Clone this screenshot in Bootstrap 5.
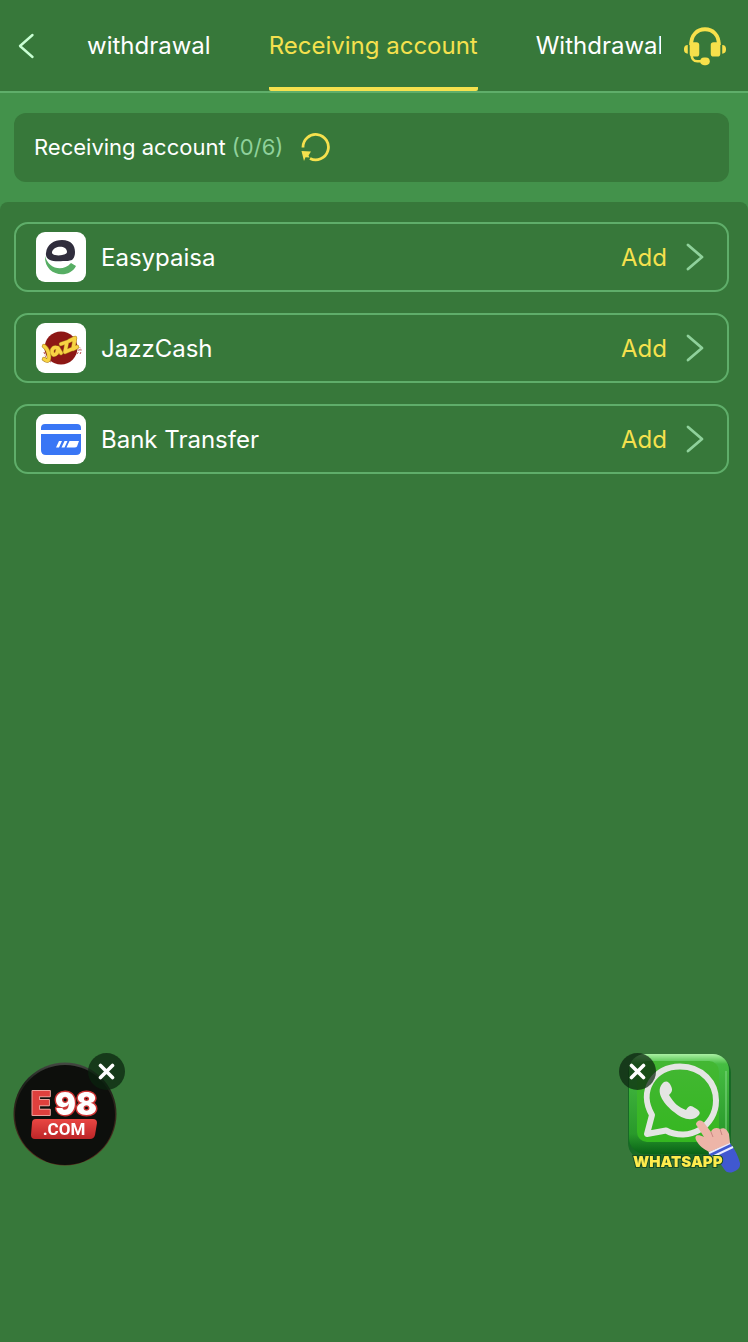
<!DOCTYPE html>
<html lang="en">
<head>
<meta charset="utf-8">
<meta name="viewport" content="width=device-width, initial-scale=1">
<title>Receiving account</title>
<link href="https://cdn.jsdelivr.net/npm/bootstrap@5.3.0/dist/css/bootstrap.min.css" rel="stylesheet">
<style>
  :root { --base: #37783a; --band: #43924b; --line: #5fae6a; --gold: #f5e14e; --mint: #8fd19b; }
  body { background: var(--base); color: #fff; font-family: Inter, "Liberation Sans", sans-serif; font-size: 24px; line-height: 32px; }
  a { color: inherit; text-decoration: none; }
  svg { display: block; }
  .topbar { height: 93px; border-bottom: 2px solid var(--line); }
  .back { width: 87px; padding-left: 18px; }
  .tabs { gap: 58px; margin-right: 22px; }
  .tab { border-top: 4px solid transparent; border-bottom: 4px solid transparent; white-space: nowrap; }
  .tab.active { color: var(--gold); border-bottom-color: var(--gold); border-radius: 2px; }
  .support { margin-right: 21px; }
  .band { background: var(--band); }
  .gutter { padding: 20px 19px 20px 14px; }
  .summary { background: var(--base); border-radius: 12px; height: 69px; padding: 0 20px 2px; font-size: 22px; }
  .count { color: var(--mint); }
  .sheet { background: var(--base); border-radius: 8px 8px 0 0; }
  .methods { gap: 21px; }
  .method { height: 70px; border: 2px solid var(--line); border-radius: 14px; padding: 0 22px 0 20px; }
  .logo { width: 50px; height: 50px; border-radius: 9px; background: #fff; margin-right: 15px; overflow: hidden; }
  .label { padding-top: 2px; }
  .add { color: var(--gold); margin-right: 18px; }
  .promo { bottom: 169px; }
  .promo-left { left: 12px; }
  .promo-right { right: 4px; }
  .close-dot { width: 37px; height: 37px; border: 0; background: rgba(10, 35, 14, .72); top: 0; }
  .promo-left .close-dot { left: 76px; }
  .promo-right .close-dot { left: 0; }
</style>
</head>
<body class="min-vh-100">
<header class="topbar d-flex">
  <button type="button" class="back btn border-0 rounded-0 py-0 pe-0 d-flex align-items-center flex-shrink-0" aria-label="Back">
    <svg width="18" height="26" viewBox="0 0 18 26" fill="none" stroke="#c9ffd4" stroke-width="2.4" stroke-linecap="round" stroke-linejoin="round"><path d="M14.500 2 2 13 14.500 24"/></svg>
  </button>
  <nav class="tabs d-flex flex-grow-1 overflow-hidden">
    <a href="#" class="tab d-flex align-items-center">withdrawal</a>
    <a href="#" class="tab active d-flex align-items-center" aria-current="page">Receiving account</a>
    <a href="#" class="tab d-flex align-items-center">Withdrawal</a>
  </nav>
  <a href="#" class="support d-flex align-items-center" aria-label="Customer service">
    <svg width="44" height="40" viewBox="0 0 46 40" fill="#f7e04b"><path d="M8.500 19C8.500 8 15 2.500 23 2.500S37.500 8 37.500 19" fill="none" stroke="#f7e04b" stroke-width="4"/><path d="M7 16h7q3 0 3 3v9q0 3-3 3h-4q-3 0-3-3zM39 16h-7q-3 0-3 3v9q0 3 3 3h4q3 0 3-3zM5 19v9Q1 28 1 23.500T5 19zM41 19v9q4 0 4-4.500T41 19z"/><path d="M9 28q0 8 6 8h6" fill="none" stroke="#f7e04b" stroke-width="2.600"/><rect x="18" y="32" width="10" height="8" rx="4"/></svg>
  </a>
</header>
<main class="band">
  <section class="gutter">
    <div class="summary d-flex align-items-center">
      <span>Receiving account <span class="count">(0/6)</span></span>
      <button type="button" class="btn border-0 p-0 ms-3" aria-label="Refresh">
        <svg width="32" height="30" viewBox="0 0 32 30"><path d="M4 15.500A12.700 12.700 0 1 1 11 26.500" fill="none" stroke="#f5e14e" stroke-width="2.800"/><path d="m2.500 19 9.500.5-2.500 4 1 2-4-.2L5 29z" fill="#f5e14e"/></svg>
      </button>
    </div>
  </section>
  <section class="sheet gutter">
    <div class="methods d-flex flex-column">
      <a href="#" class="method d-flex align-items-center">
        <span class="logo"><svg width="50" height="50" viewBox="0 0 50 50"><path fill="#57ae64" d="M9 24c3 12 17 17 26 7l5 3c-7 14-32 10-31-10z"/><path fill="#302d3d" fill-rule="evenodd" d="M10 21C11 12 18 8 26 8c9 0 13 5 13 12 0 4-1 6-3 8-3 1-5 1-9 1-10 1-18-1-17-8zm6-1c-1 5 15 4 15 0 0-7-13-7-15 0z"/></svg></span>
        <span class="label me-auto">Easypaisa</span><span class="label add">Add</span>
        <svg width="20" height="28" viewBox="0 0 20 28" fill="none" stroke="#8fd19b" stroke-width="2.800" stroke-linecap="round" stroke-linejoin="round"><path d="m3 2 14 12L3 26"/></svg>
      </a>
      <a href="#" class="method d-flex align-items-center">
        <span class="logo"><svg width="50" height="50" viewBox="0 0 50 50"><circle cx="25" cy="25" r="16.500" fill="#8d1715"/><path d="M8 29q2 8 7 10M41 31q3-4 2-7M44 31q2-3 0-7" fill="none" stroke="#b54542" stroke-dasharray="2 1.500"/><g fill="none" stroke-linecap="round" stroke-linejoin="round"><path d="M8 23q5 4 5 11 0 6-5 2M22 25q-6-2-6 4 1 5 5 1l1-5 3 5M25 21l6-2-2 10 7-3M33 18l6-3-2 11 4-2" stroke="#a77b1d" stroke-width="4.400"/><path d="M8 23q5 4 5 11 0 6-5 2M22 25q-6-2-6 4 1 5 5 1l1-5 3 5M25 21l6-2-2 10 7-3M33 18l6-3-2 11 4-2" stroke="#f8d344" stroke-width="3.400"/></g></svg></span>
        <span class="label me-auto">JazzCash</span><span class="label add">Add</span>
        <svg width="20" height="28" viewBox="0 0 20 28" fill="none" stroke="#8fd19b" stroke-width="2.800" stroke-linecap="round" stroke-linejoin="round"><path d="m3 2 14 12L3 26"/></svg>
      </a>
      <a href="#" class="method d-flex align-items-center">
        <span class="logo"><svg width="50" height="50" viewBox="0 0 50 50" fill="#3976f5"><path d="M5 16v-2q0-4 4-4h32q4 0 4 4v2zM5 20h40v16q0 5-5 5H10q-5 0-5-5z"/><path fill="#fff" d="m23 27-3 6.500h3l3-6.500zm5.500 0-3 6.500h3l3-6.500zm5 0-3 6.500h8q2 0 2.500-1l2-5.500z"/></svg></span>
        <span class="label me-auto">Bank Transfer</span><span class="label add">Add</span>
        <svg width="20" height="28" viewBox="0 0 20 28" fill="none" stroke="#8fd19b" stroke-width="2.800" stroke-linecap="round" stroke-linejoin="round"><path d="m3 2 14 12L3 26"/></svg>
      </a>
    </div>
  </section>
</main>

<aside class="promo promo-left position-fixed">
  <a href="#" aria-label="E98.com"><svg width="113" height="120" viewBox="0 0 113 120">
    <defs><linearGradient id="rim" x2="0" y2="1"><stop stop-color="#454843"/><stop offset=".2" stop-color="#1c211b"/><stop offset="1" stop-color="#5b2c1c"/></linearGradient><linearGradient id="red" x2="0" y2="1"><stop stop-color="#e94743"/><stop offset="1" stop-color="#bd2628"/></linearGradient></defs>
    <circle cx="53" cy="61" r="51.500" fill="url(#rim)"/><circle cx="53" cy="62" r="50" fill="#0d0f0c"/>
    <g font-family="Inter, sans-serif" font-weight="900" font-size="33" paint-order="stroke" stroke-linejoin="round"><text x="19" y="62" fill="#df403d" stroke="#eda09a" stroke-width="2">E</text><text x="43" y="62" font-size="31" fill="#fff" stroke="#ce3434" stroke-width="3">98</text></g>
    <path d="M24 66h57q4 0 4 4l-2 12q-1 4-5 4H23q-4 0-4-4l1-12q0-4 4-4z" fill="url(#red)"/>
    <text x="52" y="82" text-anchor="middle" font-family="Roboto, sans-serif" font-weight="700" font-size="17" fill="#fff">.COM</text>
  </svg></a>
  <button type="button" class="close-dot position-absolute rounded-circle p-0 d-flex align-items-center justify-content-center" aria-label="Close"><svg width="17" height="17" viewBox="0 0 17 17" stroke="#fff" stroke-width="3.600" stroke-linecap="round"><path d="m2.500 2.500 12 12m0-12-12 12"/></svg></button>
</aside>
<aside class="promo promo-right position-fixed">
  <a href="#" aria-label="WhatsApp"><svg width="125" height="120" viewBox="0 0 125 120">
    <defs><linearGradient id="tile" x2="0" y2="1"><stop stop-color="#aaf0a3"/><stop offset=".1" stop-color="#46bd42"/><stop offset=".8" stop-color="#29992b"/><stop offset="1" stop-color="#096217"/></linearGradient><linearGradient id="face" x2="0" y2="1"><stop stop-color="#43b733"/><stop offset="1" stop-color="#35b720"/></linearGradient></defs>
    <rect x="9" y="3" width="103" height="104" rx="17" fill="#176a25"/><rect x="10" y="1" width="100" height="100" rx="16" fill="url(#tile)"/><rect x="18" y="8" width="82" height="81" rx="10" fill="url(#face)"/>
    <path d="M107 18v64" stroke="#82d985" stroke-width="2" opacity=".5"/>
    <path d="m28 81 5-19C19 38 35 13.500 61 13.500c23 0 36 17 36 34 0 26-27 42-50 30z" fill="none" stroke="#e4e5e3" stroke-width="6" stroke-linejoin="round"/>
    <path d="M43 31c3-4 7-3 9 2 2 4 1 6-2 9 5 8 9 12 17 15 3-5 5-5 9-2 5 3 6 5 3 8-6 6-16 3-24-4-9-7-19-19-12-28z" fill="#e4e5e3"/>
    <path d="m89 101 22-11q7 9 10 20 1 6-7 9-6 2-9-3-5-9-16-15z" fill="#4058d0"/><path d="m90 100 21-10M93 104l21-10" stroke="#e8ecff" stroke-width="2"/>
    <path d="M78 69c3-3 6-1 8 2l6 8c1-4 6-5 9-3 5-2 7 1 9 5l1 9-21 9c-5-3-10-6-13-12-2-5 2-6 8-3l-7-11q-2-2 0-4z" fill="#edb5a8"/><path d="m92 79 2 5m7-8 2 6" stroke="#c98582"/>
    <text x="14" y="114" font-family="Inter, sans-serif" font-size="15" font-weight="900" fill="#ffec4d" stroke="#164d25" stroke-width="2" paint-order="stroke">WHATSAPP</text>
  </svg></a>
  <button type="button" class="close-dot position-absolute rounded-circle p-0 d-flex align-items-center justify-content-center" aria-label="Close"><svg width="17" height="17" viewBox="0 0 17 17" stroke="#fff" stroke-width="3.600" stroke-linecap="round"><path d="m2.500 2.500 12 12m0-12-12 12"/></svg></button>
</aside>
<script src="https://cdn.jsdelivr.net/npm/bootstrap@5.3.0/dist/js/bootstrap.bundle.min.js"></script>
</body>
</html>
